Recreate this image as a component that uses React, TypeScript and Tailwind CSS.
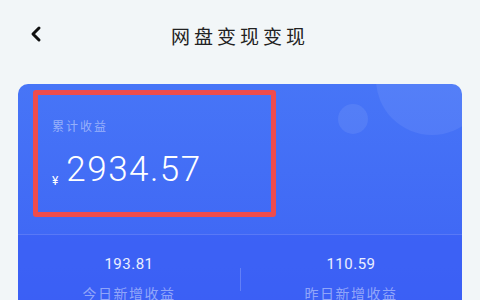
import { ChevronLeft } from "lucide-react";

const cjk = { fontFamily: '"Noto Sans CJK SC", "Noto Sans", sans-serif' };

const Stat = ({ value, label }: { value: string; label: string }) => (
  <div className="flex flex-col items-center pt-[20px]">
    <span className="text-[15px] leading-[18px] text-white/90 tracking-[0.5px]" style={{ fontFamily: "Roboto, sans-serif" }}>
      {value}
    </span>
    <span className="mt-[10px] text-[14px] leading-[20px] text-white/45 tracking-[1.5px]" style={cjk}>
      {label}
    </span>
  </div>
);

export default function App() {
  return (
    <div className="w-[480px] h-[300px] overflow-hidden bg-[#f2f6f8]">
      {/* Header */}
      <div className="relative flex h-[72px] items-center justify-center">
        <ChevronLeft className="absolute left-[24px] top-[22px] h-[24px] w-[24px] text-[#111]" strokeWidth={3} />
        <span className="text-[19px] tracking-[4px] text-[#222]" style={cjk}>
          网盘变现变现
        </span>
      </div>

      {/* Earnings card */}
      <div className="relative mx-[18px] mt-[12px] overflow-hidden rounded-[10px] bg-gradient-to-b from-[#4775f7] to-[#3d62f4]">
        <div className="absolute right-[-26px] top-[-61px] h-[112px] w-[112px] rounded-full bg-white/[0.07]" />
        <div className="absolute left-[320px] top-[20px] h-[30px] w-[30px] rounded-full bg-white/[0.08]" />

        <div className="relative h-[150px] px-[15px] pt-[6px]">
          <div className="h-[127px] w-[243px] rounded-[3px] border-[5px] border-[#ef4c4c] pl-[14px] pt-[24px]">
            <div className="text-[12px] leading-[14px] tracking-[2px] text-white/45" style={cjk}>
              累计收益
            </div>
            <div className="mt-[17px] flex items-end text-white" style={{ fontFamily: "Roboto, sans-serif" }}>
              <span className="mb-[2px] mr-[8px] text-[12px] leading-[14px]">¥</span>
              <span className="text-[35px] font-light leading-[40px] tracking-[1.5px]">2934.57</span>
            </div>
          </div>
        </div>

        <div className="relative grid h-[80px] grid-cols-2 border-t border-white/15 bg-[#3a5ef5]/60">
          <Stat value="193.81" label="今日新增收益" />
          <div className="absolute left-1/2 top-[33px] h-[23px] w-px bg-white/20" />
          <Stat value="110.59" label="昨日新增收益" />
        </div>
      </div>
    </div>
  );
}
